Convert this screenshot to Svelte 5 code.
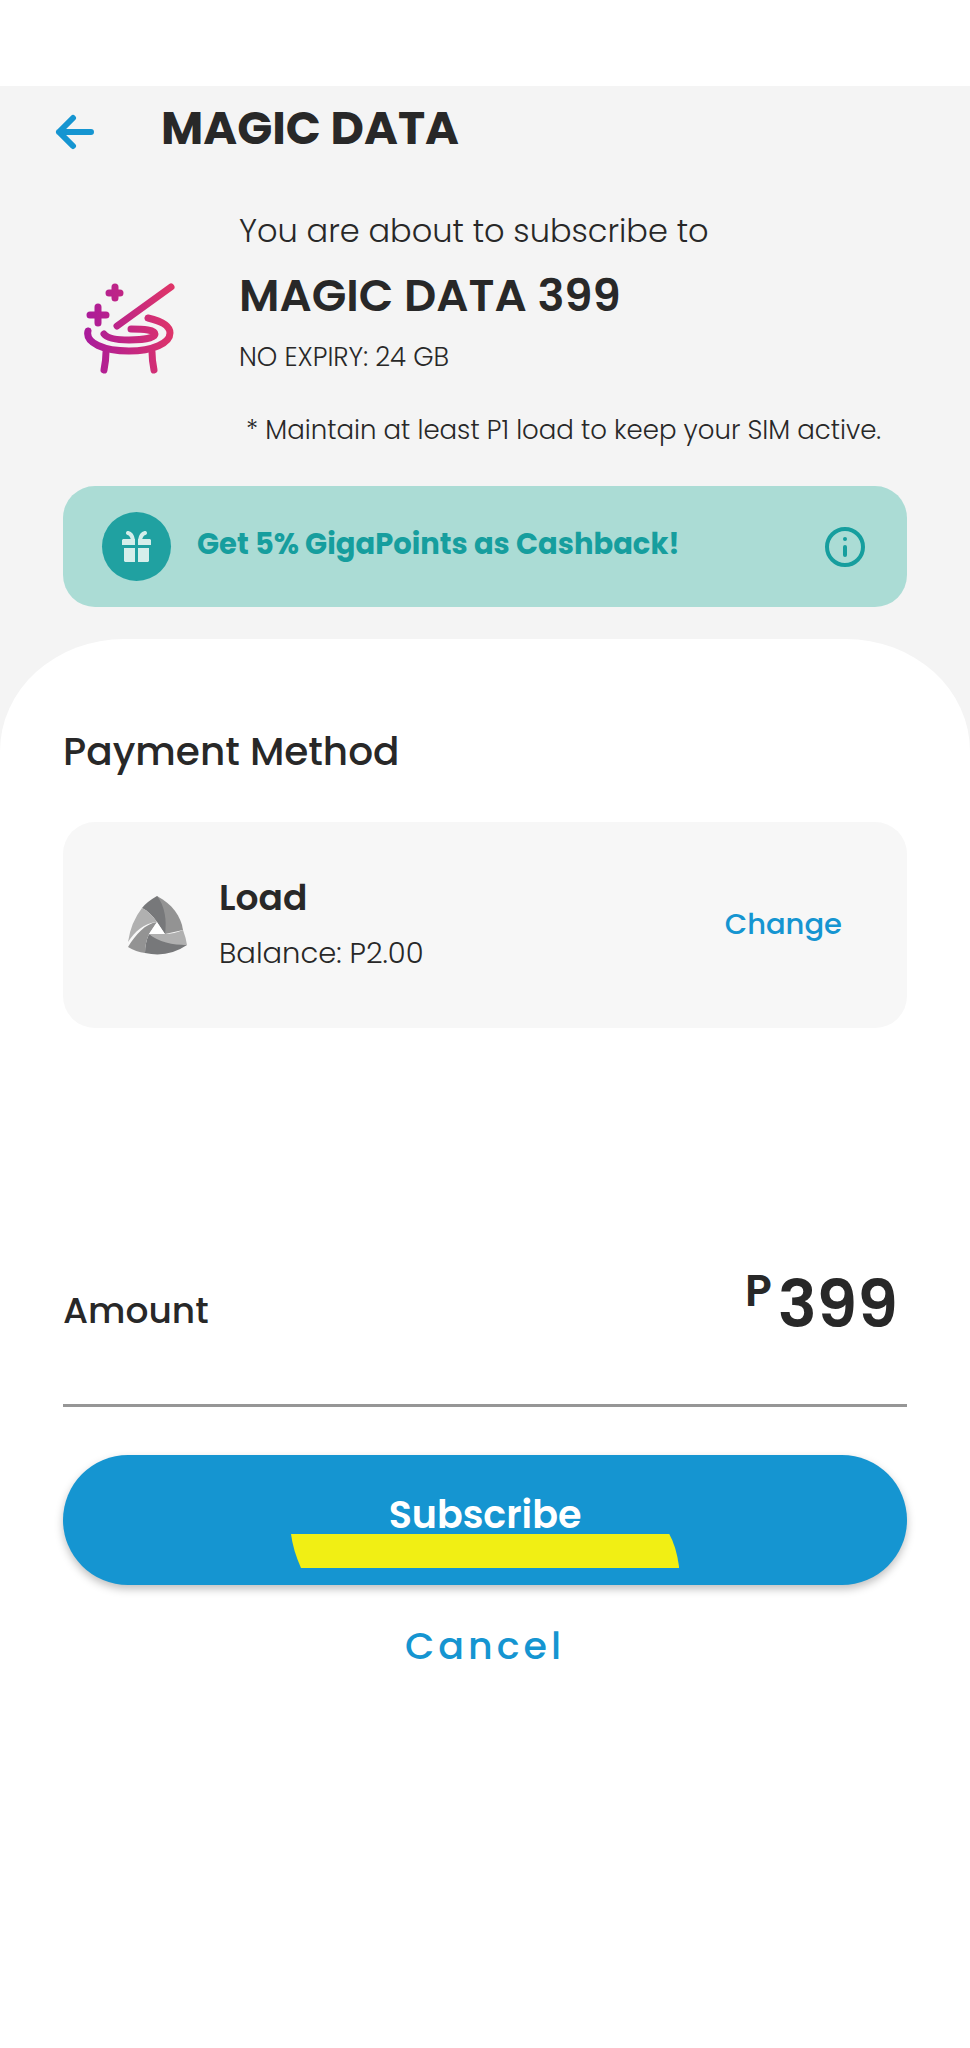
<script lang="ts">
  export let title: string = 'MAGIC DATA';
  export let plan: string = 'MAGIC DATA 399';
  export let allowance: string = 'NO EXPIRY: 24 GB';
  export let balance: string = 'P2.00';
  export let amount: number = 399;
</script>

<main class="screen">
  <header class="topbar">
    <button class="back" aria-label="Back">
      <svg viewBox="0 0 40 36" width="40" height="36" fill="none" stroke="#1595d1" stroke-width="6" stroke-linecap="round" stroke-linejoin="round">
        <path d="M18 4 4 18l14 14M4 18h32" />
      </svg>
    </button>
    <h1>{title}</h1>
  </header>

  <section class="plan">
    <svg class="plan-icon" viewBox="0 0 92 92" fill="none" stroke="url(#magic)" stroke-width="7" stroke-linecap="round" stroke-linejoin="round">
      <defs>
        <linearGradient id="magic" gradientUnits="userSpaceOnUse" x1="0" y1="46" x2="92" y2="40">
          <stop offset="0" stop-color="#a81a9c" />
          <stop offset="1" stop-color="#df3568" />
        </linearGradient>
      </defs>
      <path d="M32 4v11M26 10h11" />
      <path d="M15 24v16M7 32h16" />
      <path d="M34 43 88 4" />
      <path d="M5 48C2 60 21 68 46 68c24 0 41-8 41-18 0-7-9-12-22-15" />
      <path d="M21 51c3 4 13 6 25 6 15 0 26-2 26-6 0-4-11-5-24-5" />
      <path d="M23 69c0 8-1 13-2 18M69 69c0 8 1 13 2 18" />
    </svg>
    <div class="plan-text">
      <p class="lead">You are about to subscribe to</p>
      <h2>{plan}</h2>
      <p class="small">{allowance}</p>
      <p class="small note">* Maintain at least P1 load to keep your SIM active.</p>
    </div>
  </section>

  <section class="cashback">
    <span class="gift">
      <svg viewBox="0 0 29 31" width="29" height="31" fill="#d6eeeb">
        <path d="M6 2q4 1 5 7M23 2q-4 1-5 7" fill="none" stroke="#d6eeeb" stroke-width="4" stroke-linecap="round" />
        <path d="M1 8h12v6H0V9zM16 8h12l1 1v5H16z" />
        <path d="M2 17h11v14H3l-1-1zM16 17h11v13l-1 1H16z" />
      </svg>
    </span>
    <strong>Get 5% GigaPoints as Cashback!</strong>
    <button class="info" aria-label="Cashback details">
      <svg viewBox="0 0 42 42" width="42" height="42" fill="none" stroke="#169e9e" stroke-width="4" stroke-linecap="round">
        <circle cx="21" cy="21" r="18" />
        <path d="M21 21v8" />
        <circle cx="21" cy="13" r="2" fill="#169e9e" stroke="none" />
      </svg>
    </button>
  </section>

  <section class="sheet">
    <h3>Payment Method</h3>

    <div class="method">
      <svg class="logo" viewBox="0 0 59 59">
        <path d="M29 0C44 8 53 20 55 34L37 38 29 26z" fill="#939393" />
        <path d="M29 0C22 4 17 8 14 12 20 15 25 20 29 26L37 38C39 25 37 10 29 0" fill="#77787a" />
        <path d="M59 49Q40 62 17 57 17 47 21 38 30 43 59 49" fill="#77787a" />
        <path d="M55 34Q58 42 59 49C45 49 30 46 21 38H37Q46 38 55 34" fill="#b0b0b0" />
        <path d="M0 51C8 38 17 28 29 26L21 38Q17 47 17 57 8 56 0 51" fill="#939393" />
        <path d="M14 12C20 15 25 20 29 26 15 27 7 36 0 46Q3 26 14 12" fill="#b0b0b0" />
        <path d="M29 26 21 38H37z" fill="#fff" />
      </svg>
      <div class="method-text">
        <strong>Load</strong>
        <span>Balance: {balance}</span>
      </div>
      <button class="change">Change</button>
    </div>

    <div class="total">
      <span class="total-label">Amount</span>
      <span class="price"><span class="currency">P</span>{amount}</span>
    </div>

    <div class="actions">
      <button class="subscribe">
        Subscribe
        <svg class="marker" viewBox="0 0 388 34" preserveAspectRatio="none" aria-hidden="true">
          <path d="M0 0H378Q385 12 388 34H10Q2 16 0 0" fill="#f1ef14" />
        </svg>
      </button>
      <button class="cancel">Cancel</button>
    </div>
  </section>
</main>

<style>
  :global(body) {
    margin: 0;
    background: #fff;
  }

  .screen {
    border-top: 86px solid #fff;
    background: #f4f4f4;
    color: #282828;
    font-family: Poppins, Inter, sans-serif;
  }

  h1, h2, h3, p {
    margin: 0;
  }

  button {
    border: 0;
    padding: 0;
    background: none;
    color: #1595d1;
    font-family: inherit;
    cursor: pointer;
  }

  svg {
    display: block;
    flex: none;
  }

  .topbar {
    display: flex;
    align-items: center;
    gap: 66px;
    padding: 14px 55px 0;
  }

  .back {
    padding-top: 8px;
  }

  h1 {
    font-size: 46px;
    line-height: 56px;
    font-weight: 700;
  }

  .plan {
    display: flex;
    align-items: center;
    gap: 64px;
    padding: 55px 63px 0 83px;
  }

  .plan-icon {
    width: 92px;
    height: 92px;
  }

  .lead {
    font-size: 32px;
    line-height: 40px;
    font-weight: 300;
  }

  h2 {
    margin: 17px 0;
    font-size: 45px;
    line-height: 56px;
    font-weight: 600;
  }

  .small {
    font-size: 26px;
    line-height: 32px;
    font-weight: 300;
  }

  .note {
    margin-top: 41px;
    padding-left: 7px;
  }

  .cashback {
    display: flex;
    align-items: center;
    gap: 26px;
    box-sizing: border-box;
    min-height: 121px;
    margin: 40px 63px 32px;
    padding: 0 41px 0 39px;
    border-radius: 32px;
    background: #abdcd5;
    color: #169e9e;
  }

  .gift {
    display: grid;
    place-items: center;
    flex: none;
    width: 69px;
    height: 69px;
    border-radius: 50%;
    background: #20a1a1;
  }

  .cashback strong {
    flex: 1;
    padding-bottom: 6px;
    font-size: 29px;
    line-height: 40px;
    font-weight: 700;
  }

  .sheet {
    padding: 89px 63px 0;
    border-radius: 124px 124px 0 0 / 112px 112px 0 0;
    background: #fff;
  }

  h3 {
    font-size: 39px;
    line-height: 48px;
    font-weight: 500;
  }

  .method {
    display: flex;
    align-items: center;
    gap: 32px;
    box-sizing: border-box;
    min-height: 206px;
    margin-top: 46px;
    padding: 0 65px;
    border-radius: 32px;
    background: #f7f7f7;
  }

  .logo {
    width: 59px;
    height: 59px;
  }

  .method-text {
    display: flex;
    flex: 1;
    flex-direction: column;
    gap: 15px;
    font-size: 29px;
    line-height: 40px;
    font-weight: 300;
  }

  .method-text strong {
    font-size: 36px;
    font-weight: 600;
  }

  .change {
    padding-bottom: 2px;
    font-size: 29px;
    line-height: 40px;
    font-weight: 500;
  }

  .total {
    display: flex;
    align-items: center;
    justify-content: space-between;
    margin-top: 237px;
    padding: 0 9px 59px 0;
    border-bottom: 3px solid #969696;
  }

  .total-label {
    padding-top: 12px;
    font-size: 36px;
    line-height: 40px;
    font-weight: 500;
  }

  .price {
    display: flex;
    gap: 6px;
    font-size: 65px;
    line-height: 80px;
    font-weight: 600;
  }

  .currency {
    font-size: 44px;
    line-height: 52px;
  }

  .actions {
    display: flex;
    flex-direction: column;
    align-items: center;
    gap: 37px;
    margin-top: 48px;
  }

  .subscribe {
    position: relative;
    width: 100%;
    padding: 36px 0 46px;
    border-radius: 65px;
    background: #1595d1;
    box-shadow: 0 4px 8px rgba(0, 0, 0, 0.25);
    color: #fff;
    font-size: 38px;
    line-height: 48px;
    font-weight: 600;
  }

  .marker {
    position: absolute;
    left: 27%;
    bottom: 17px;
    width: 46%;
    height: 34px;
  }

  .cancel {
    font-size: 38px;
    line-height: 48px;
    font-weight: 500;
    letter-spacing: 4px;
  }
</style>
